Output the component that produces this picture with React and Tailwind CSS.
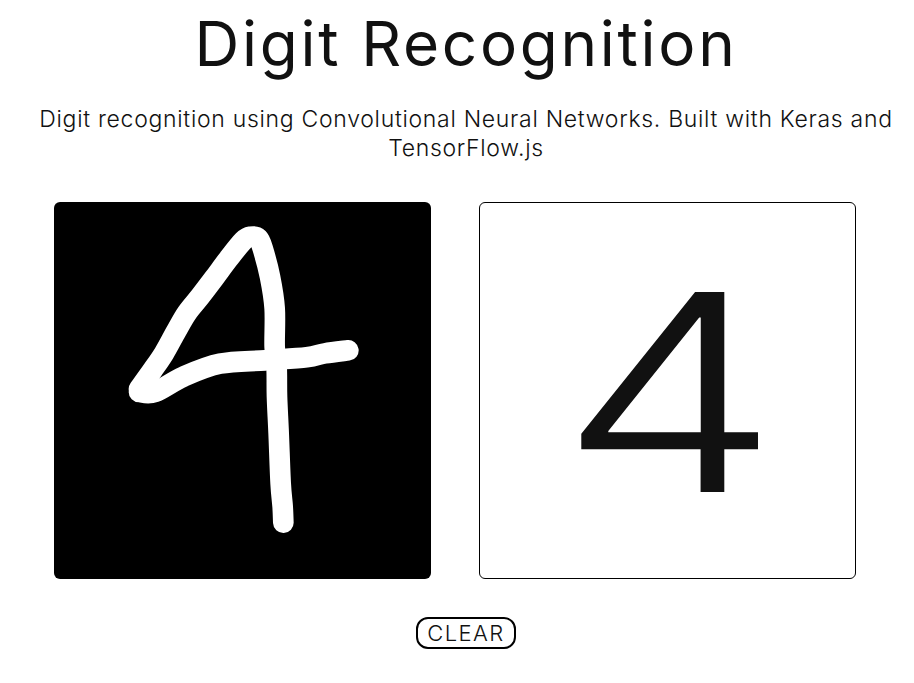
// stroke points traced from the drawing, in canvas coordinates
const STEM = [
  [730, 998], [728, 950], [722, 880], [716, 730], [711, 620], [710, 535], [704, 470], [704, 355],
  [690, 260], [668, 175], [655, 145], [632, 140], [610, 152], [565, 207], [522, 265], [480, 320],
  [440, 370], [408, 425], [372, 490], [338, 540], [297, 597],
];
const BAR = [
  [297, 606], [345, 606], [430, 560], [540, 521], [675, 511], [800, 502], [855, 490], [925, 481],
];

// catmull-rom through the points so the stroke looks hand drawn
const smooth = (pts) => {
  let d = `M${pts[0][0]} ${pts[0][1]}`;
  for (let i = 0; i < pts.length - 1; i++) {
    const p0 = pts[i - 1] || pts[i];
    const p1 = pts[i];
    const p2 = pts[i + 1];
    const p3 = pts[i + 2] || p2;
    d += ` C${p1[0] + (p2[0] - p0[0]) / 6} ${p1[1] + (p2[1] - p0[1]) / 6} ${p2[0] - (p3[0] - p1[0]) / 6} ${p2[1] - (p3[1] - p1[1]) / 6} ${p2[0]} ${p2[1]}`;
  }
  return d;
};

export default function App() {
  return (
    <div className="min-h-screen bg-white text-[#111] font-['Inter',sans-serif] pl-[20px] pr-[2px]">
      <h1 className="text-center text-[62px] leading-[88px] font-normal tracking-[2.7px]">Digit Recognition</h1>

      <p className="mt-[17px] px-[10px] text-center text-[23px] leading-[29px] font-light tracking-[0.7px]">
        Digit recognition using Convolutional Neural Networks. Built with Keras and TensorFlow.js
      </p>

      <div className="mt-[39px] ml-[34px] flex gap-[48px]">
        {/* drawing canvas */}
        <div className="w-[377px] h-[377px] bg-black rounded-[6px] overflow-hidden">
          <svg viewBox="42 36 1131 1131" className="block w-full h-full">
            <path d={smooth(STEM)} fill="none" stroke="white" strokeWidth="62" strokeLinecap="round" strokeLinejoin="round" />
            <path d={smooth(BAR)} fill="none" stroke="white" strokeWidth="62" strokeLinecap="round" strokeLinejoin="round" />
          </svg>
        </div>

        {/* prediction */}
        <div className="w-[377px] h-[377px] border border-black rounded-[6px] flex items-center justify-center pl-[4px] pt-[4px]">
          <span className="block text-[275px] leading-none font-[260] scale-x-[1.28]">4</span>
        </div>
      </div>

      <div className="mt-[38px] flex justify-center">
        <button className="w-[100px] h-[32px] border-2 border-black rounded-[12px] text-[22px] leading-none font-light tracking-[1.4px]">
          CLEAR
        </button>
      </div>
    </div>
  );
}
